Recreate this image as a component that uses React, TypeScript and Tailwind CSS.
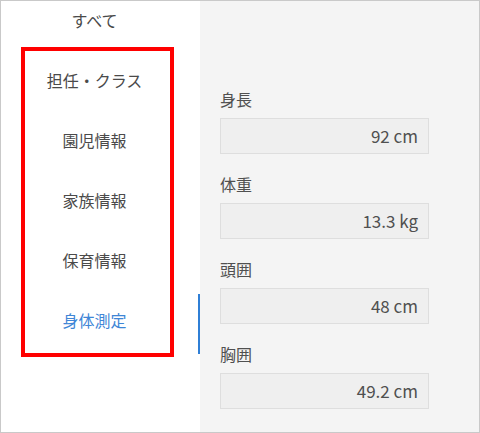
const tabs = ["すべて", "担任・クラス", "園児情報", "家族情報", "保育情報", "身体測定"];
const active = "身体測定";

const measurements = [
  { label: "身長", value: "92 cm" },
  { label: "体重", value: "13.3 kg" },
  { label: "頭囲", value: "48 cm" },
  { label: "胸囲", value: "49.2 cm" },
];

const font = "font-['Noto_Sans_CJK_JP','Noto_Sans',sans-serif]";

const App = () => {
  return (
    <div className={`relative flex w-[480px] h-[433px] overflow-hidden border border-[#c9c9c9] bg-white ${font}`}>
      <div className="w-[199px] shrink-0 bg-white">
        <div className="-mt-[11px] flex flex-col">
          {tabs.map((tab) => (
            <div key={tab} className="flex h-[60px] items-stretch">
              <div
                className={`flex flex-1 items-center justify-center text-[16px] leading-[20px] ${
                  tab === active ? "text-[#3f86d6]" : "text-[#4a4a4a]"
                }`}
              >
                {tab}
              </div>
              <div className="flex w-[12px] justify-end pt-[4px]">
                {tab === active && <div className="h-[60px] w-[2px] bg-[#2f7fd6]"></div>}
              </div>
            </div>
          ))}
        </div>
      </div>

      <div className="flex-1 bg-[#f4f4f4] pl-[20px] pt-[88px]">
        {measurements.map((m) => (
          <div key={m.label} className="mb-[20px]">
            <div className="mb-[9px] text-[16px] leading-[20px] text-[#505050]">{m.label}</div>
            <div className="flex h-[36px] w-[209px] items-center justify-end border border-[#dedede] bg-[#efefef] pr-[10px] text-[17px] text-[#505050]">
              {m.value}
            </div>
          </div>
        ))}
      </div>

      {/* 注釈の赤枠 */}
      <div className="pointer-events-none absolute left-[20px] top-[46px] h-[310px] w-[153px] border-4 border-[#ff0000]"></div>
    </div>
  );
};

export default App;
